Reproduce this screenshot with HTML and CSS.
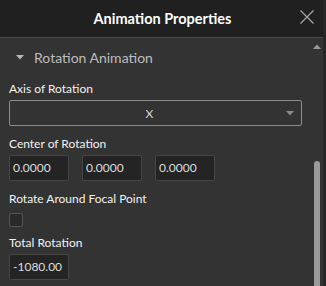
FILE: index.html
```html
<!DOCTYPE html>
<html lang="en">

<head>
    <meta charset="UTF-8">
    <meta name="viewport" content="width=device-width, initial-scale=1.0">
    <title>Animation Properties</title>
    <link rel="stylesheet" href="styles.css">
</head>

<body>
    <div class="panel">
        <div class="header">
            <span class="title">Animation Properties</span>
            <svg class="close" viewBox="0 0 16 16" width="16" height="16">
                <path d="M1.5 1.5 L14.5 14.5 M14.5 1.5 L1.5 14.5" stroke="#a8a8a8" stroke-width="1.2" fill="none" />
            </svg>
        </div>

        <div class="body">
            <div class="content">
                <div class="section">
                    <svg class="caret" viewBox="0 0 8 5" width="8" height="5">
                        <path d="M0 0 L8 0 L4 4.5 Z" fill="#b8b8b8" />
                    </svg>
                    <span>Rotation Animation</span>
                </div>

                <div class="field">
                    <div class="label">Axis of Rotation</div>
                    <div class="select">
                        <span class="select-value">X</span>
                        <svg class="select-arrow" viewBox="0 0 8 5" width="8" height="5">
                            <path d="M0 0 L8 0 L4 4.5 Z" fill="#8a8a8a" />
                        </svg>
                    </div>
                </div>

                <div class="field">
                    <div class="label">Center of Rotation</div>
                    <div class="row">
                        <div class="input">0.0000</div>
                        <div class="input">0.0000</div>
                        <div class="input">0.0000</div>
                    </div>
                </div>

                <div class="field">
                    <div class="label">Rotate Around Focal Point</div>
                    <div class="checkbox"></div>
                </div>

                <div class="field">
                    <div class="label">Total Rotation</div>
                    <div class="input">-1080.00</div>
                </div>
            </div>

            <div class="scrollbar">
                <svg class="scroll-up" viewBox="0 0 8 5" width="8" height="5">
                    <path d="M0 5 L8 5 L4 0.5 Z" fill="#9a9a9a" />
                </svg>
                <div class="track">
                    <div class="thumb"></div>
                </div>
            </div>
        </div>
    </div>
</body>

</html>
```

FILE: styles.css
```css
body {
    margin: 0;
    background-color: #333333;
    font-family: Lato, "Noto Sans", sans-serif;
    overflow: hidden;
}

.panel {
    width: 323px;
    height: 286px;
    border-right: 3px solid #262626;
    display: flex;
    flex-direction: column;
    background-color: #333333;
}

.header {
    height: 37px;
    flex-shrink: 0;
    background-color: #202020;
    border-bottom: 1px solid #4a4a4a;
    position: relative;
    display: flex;
    align-items: center;
    justify-content: center;
}

.title {
    color: #ffffff;
    font-weight: bold;
    font-size: 14.5px;
    padding-left: 2px;
}

.close {
    position: absolute;
    right: 8px;
    top: 9px;
}

.body {
    flex: 1;
    display: flex;
    min-height: 0;
}

.content {
    flex: 1;
    padding: 0 8px 0 9px;
}

.section {
    height: 38px;
    display: flex;
    align-items: center;
    gap: 10px;
    color: #bdbdbd;
    font-size: 14px;
    padding-left: 7px;
    margin-bottom: 4px;
}

.caret {
    margin-top: 1px;
}

.field {
    margin-bottom: 9px;
}

.label {
    color: #f2f2f2;
    font-size: 12px;
    height: 18px;
    line-height: 18px;
    margin-bottom: 2px;
}

.select {
    height: 24px;
    border: 1px solid #8c8c8c;
    border-radius: 2px;
    display: flex;
    align-items: center;
    position: relative;
    justify-content: center;
}

.select-value {
    color: #d8d8d8;
    font-size: 12px;
    margin-left: -12px;
}

.select-arrow {
    position: absolute;
    right: 7px;
    top: 10px;
}

.row {
    display: flex;
    gap: 13px;
}

.input {
    width: 55px;
    height: 24px;
    line-height: 24px;
    background-color: #242424;
    border: 1px solid #464646;
    border-radius: 2px;
    color: #dedede;
    font-size: 12px;
    padding-left: 3px;
}

.checkbox {
    width: 12px;
    height: 12px;
    margin-top: 5px;
    margin-bottom: -2px;
    background-color: #2a2a2a;
    border: 1px solid #545454;
    border-radius: 2px;
}

.scrollbar {
    width: 13px;
    display: flex;
    flex-direction: column;
    align-items: center;
    padding-top: 6px;
}

.scroll-up {
    flex-shrink: 0;
}

.track {
    flex: 1;
    width: 6px;
    display: flex;
    flex-direction: column;
    justify-content: flex-end;
}

.thumb {
    height: 125px;
    background-color: #9a9a9a;
    border-radius: 3px 3px 0 0;
}
```
